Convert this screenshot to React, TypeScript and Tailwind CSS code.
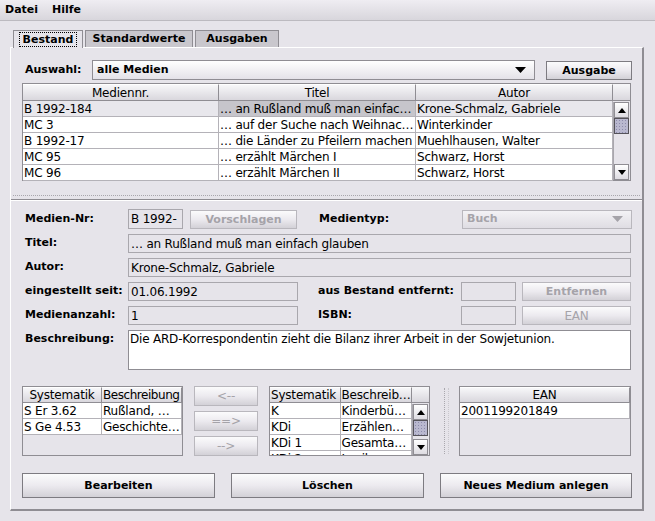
import React from "react";

const F = { fontFamily: '"DejaVu Sans", "Liberation Sans", sans-serif' };

function Btn({ w, h, label, disabled, bold = true }: { w: number; h: number; label: string; disabled?: boolean; bold?: boolean }) {
  return (
    <div
      className={`flex items-center justify-center border bg-gradient-to-b from-[#fbfbfc] via-[#eceaef] to-[#d3d1d7] ${disabled ? "border-[#b9b7bd] text-[#a5a3a9]" : "border-[#7d7b81] text-black"} ${bold ? "font-bold text-[11px]" : "text-[12px] tracking-[-0.2px]"} leading-none`}
      style={{ width: w, height: h }}
    >
      {label}
    </div>
  );
}

function Field({ w, h = 19, text, white }: { w: number; h?: number; text?: string; white?: boolean }) {
  return (
    <div
      className={`flex items-center border border-[#a9a7ad] ${white ? "bg-white" : "bg-[#e6e4ea]"} pl-[2px] text-[12px] tracking-[-0.2px] text-black whitespace-nowrap overflow-hidden`}
      style={{ width: w, height: h }}
    >
      {text}
    </div>
  );
}

function Label({ w, children }: { w: number; children: React.ReactNode }) {
  return (
    <div className="font-bold text-[11px] text-black whitespace-nowrap" style={{ width: w }}>
      {children}
    </div>
  );
}

function Scrollbar({ h }: { h: number }) {
  return (
    <div className="flex flex-col w-[16px] bg-[#e6e4ea] border-l border-[#a9a7ad]" style={{ height: h }}>
      <div className="h-[16px] flex items-center justify-center border border-[#8f8d93] bg-gradient-to-b from-white to-[#dedce2]">
        <svg width="8" height="5" viewBox="0 0 8 5"><path d="M4 0 L8 5 L0 5 Z" fill="#000" /></svg>
      </div>
      <div
        className="h-[16px] border border-[#55535a] bg-[#b9b8cf]"
        style={{ backgroundImage: "radial-gradient(#8d8bab 0.7px, transparent 0.8px)", backgroundSize: "3px 3px" }}
      />
      <div className="flex-1" />
      <div className="h-[16px] flex items-center justify-center border border-[#8f8d93] bg-gradient-to-b from-white to-[#dedce2]">
        <svg width="8" height="5" viewBox="0 0 8 5"><path d="M0 0 L8 0 L4 5 Z" fill="#000" /></svg>
      </div>
    </div>
  );
}

function HeaderCell({ w, label, align = "center", tight }: { w: number; label: string; align?: "center" | "left"; tight?: boolean }) {
  return (
    <div
      className={`h-full flex items-center ${align === "center" ? "justify-center" : "justify-start pl-[1px]"} border-r border-b border-[#8f8d93] border-t border-t-white bg-gradient-to-b from-[#f7f7f9] to-[#d9d7dd] text-[12px] ${tight ? "tracking-[-0.45px]" : "tracking-[-0.2px]"} whitespace-nowrap overflow-hidden`}
      style={{ width: w }}
    >
      {label}
    </div>
  );
}

function Cell({ w, text, bg = "bg-white" }: { w: number; text: string; bg?: string }) {
  return (
    <div
      className={`h-full flex items-center pl-[1px] border-r border-b border-[#b4b2b8] ${bg} text-[12px] tracking-[-0.2px] whitespace-nowrap overflow-hidden`}
      style={{ width: w }}
    >
      {text}
    </div>
  );
}

export default function App() {
  const rows = [
    ["B 1992-184", "… an Rußland muß man einfac…", "Krone-Schmalz, Gabriele"],
    ["MC 3", "… auf der Suche nach Weihnac…", "Winterkinder"],
    ["B 1992-17", "… die Länder zu Pfeilern machen", "Muehlhausen, Walter"],
    ["MC 95", "… erzählt Märchen I", "Schwarz, Horst"],
    ["MC 96", "… erzählt Märchen II", "Schwarz, Horst"],
  ];
  return (
    <div className="w-[655px] h-[521px] bg-[#e6e4ea] text-black overflow-hidden" style={F}>
      {/* menu */}
      <div className="h-[21px] flex items-center gap-[14px] pl-[5px] bg-gradient-to-b from-[#efedf2] to-[#d8d6dc] border-b border-[#bcbac0] font-bold text-[11px]">
        <span>Datei</span>
        <span>Hilfe</span>
      </div>
      {/* tabs */}
      <div className="flex items-end pl-[13px] mt-[9px] h-[17px] gap-[2px]">
        <div className="h-[18px] w-[70px] border-t border-l border-r border-[#8f8d93] bg-[#e6e4ea] flex items-center justify-center relative z-10 -mb-[1px]">
          <span className="font-bold text-[11px] border border-dotted border-black px-[3px] leading-[13px]">Bestand</span>
        </div>
        <div className="h-[17px] w-[108px] border-t border-l border-r border-[#8f8d93] bg-[#c9c7cd] flex items-center justify-center font-bold text-[11px]">
          Standardwerte
        </div>
        <div className="h-[17px] w-[84px] border-t border-l border-r border-[#8f8d93] bg-[#c9c7cd] flex items-center justify-center font-bold text-[11px]">
          Ausgaben
        </div>
      </div>
      {/* panel */}
      <div className="ml-[10px] w-[634px] h-[464px] border-t border-l border-white border-r-2 border-b-2 border-r-[#8f8d93] border-b-[#8f8d93] flex flex-col">
        <div className="flex items-center mt-[12px] ml-[14px] h-[20px]">
          <Label w={67}>Auswahl:</Label>
          <div className="w-[443px] h-[20px] border border-[#8f8d93] bg-gradient-to-b from-white to-[#e4e2e8] flex items-center pl-[4px] font-bold text-[11px] justify-between pr-[8px]">
            <span>alle Medien</span>
            <svg width="11" height="6" viewBox="0 0 11 6"><path d="M0 0 L11 0 L5.5 6 Z" fill="#000" /></svg>
          </div>
          <div className="ml-[11px]">
            <Btn w={86} h={19} label="Ausgabe" />
          </div>
        </div>
        {/* table */}
        <div className="ml-[11px] mt-[3px] w-[609px] h-[98px] border border-[#8f8d93] flex bg-[#e6e4ea]">
          <div className="flex flex-col w-[590px]">
            <div className="h-[17px] flex">
              <HeaderCell w={196} label="Mediennr." />
              <HeaderCell w={197} label="Titel" />
              <HeaderCell w={197} label="Autor" />
            </div>
            {rows.map((r, i) => (
              <div key={i} className="h-[16px] flex">
                <Cell w={196} text={r[0]} bg={i === 0 ? "bg-[#e8e7ec]" : "bg-white"} />
                <Cell w={197} text={r[1]} bg={i === 0 ? "bg-[#c6c5cb]" : "bg-white"} />
                <Cell w={197} text={r[2]} bg={i === 0 ? "bg-[#e8e7ec]" : "bg-white"} />
              </div>
            ))}
          </div>
          <div className="flex flex-col w-[17px]">
            <div className="h-[17px] border-b border-[#8f8d93] bg-gradient-to-b from-[#f7f7f9] to-[#d9d7dd]" />
            <div className="mt-[1px]">
              <Scrollbar h={78} />
            </div>
          </div>
        </div>
        {/* divider */}
        <div className="mt-[14px] h-[1px] mx-[2px] border-t border-dotted border-[#a9a7ad]" />
        <div className="mt-[3px] h-[2px] border-t border-[#8f8d93] border-b border-b-white" />
        {/* details */}
        <div className="flex flex-col ml-[14px] mt-[8px] gap-[5px]">
          <div className="flex items-center h-[20px]">
            <Label w={103}>Medien-Nr:</Label>
            <Field w={55} h={20} text="B 1992-" />
            <div className="ml-[7px]"><Btn w={107} h={19} label="Vorschlagen" disabled /></div>
            <div className="ml-[22px]"><Label w={143}>Medientyp:</Label></div>
            <div className="w-[170px] h-[19px] border border-[#b9b7bd] bg-gradient-to-b from-[#f3f2f5] to-[#dfdde3] flex items-center justify-between pl-[4px] pr-[8px] font-bold text-[11px] text-[#a5a3a9]">
              <span>Buch</span>
              <svg width="11" height="6" viewBox="0 0 11 6"><path d="M0 0 L11 0 L5.5 6 Z" fill="#a5a3a9" /></svg>
            </div>
          </div>
          <div className="flex items-center h-[19px]">
            <Label w={103}>Titel:</Label>
            <Field w={503} text="… an Rußland muß man einfach glauben" />
          </div>
          <div className="flex items-center h-[19px]">
            <Label w={103}>Autor:</Label>
            <Field w={503} text="Krone-Schmalz, Gabriele" />
          </div>
          <div className="flex items-center h-[19px]">
            <Label w={103}>eingestellt seit:</Label>
            <Field w={170} text="01.06.1992" />
            <div className="ml-[20px]"><Label w={143}>aus Bestand entfernt:</Label></div>
            <Field w={55} />
            <div className="ml-[6px]"><Btn w={109} h={19} label="Entfernen" disabled /></div>
          </div>
          <div className="flex items-center h-[19px]">
            <Label w={103}>Medienanzahl:</Label>
            <Field w={170} text="1" />
            <div className="ml-[20px]"><Label w={143}>ISBN:</Label></div>
            <Field w={55} />
            <div className="ml-[6px]"><Btn w={109} h={19} label="EAN" disabled bold={false} /></div>
          </div>
          <div className="flex items-start h-[40px]">
            <div className="pt-[1px]"><Label w={103}>Beschreibung:</Label></div>
            <div className="w-[503px] h-[40px] border border-[#8f8d93] bg-white pl-[1px] text-[12px] tracking-[-0.2px] leading-[16px]">
              Die ARD-Korrespondentin zieht die Bilanz ihrer Arbeit in der Sowjetunion.
            </div>
          </div>
        </div>
        {/* bottom tables */}
        <div className="flex ml-[11px] mt-[16px] h-[70px] items-start">
          <div className="w-[161px] h-[70px] border border-[#8f8d93] bg-[#e6e4ea] flex flex-col">
            <div className="h-[16px] flex">
              <HeaderCell w={79} label="Systematik" />
              <HeaderCell w={80} label="Beschreibung" align="left" tight />
            </div>
            <div className="h-[16px] flex">
              <Cell w={79} text="S Er 3.62" />
              <Cell w={80} text="Rußland, …" />
            </div>
            <div className="h-[16px] flex">
              <Cell w={79} text="S Ge 4.53" />
              <Cell w={80} text="Geschichte…" />
            </div>
          </div>
          <div className="ml-[11px] flex flex-col gap-[5px]">
            <Btn w={64} h={20} label="<--" disabled bold={false} />
            <Btn w={64} h={20} label="==>" disabled bold={false} />
            <Btn w={64} h={20} label="-->" disabled bold={false} />
          </div>
          <div className="ml-[11px] w-[161px] h-[70px] border border-[#8f8d93] bg-[#e6e4ea] flex overflow-hidden">
            <div className="flex flex-col w-[143px] overflow-hidden">
              <div className="h-[16px] flex shrink-0">
                <HeaderCell w={71} label="Systematik" align="left" />
                <HeaderCell w={72} label="Beschreib…" align="left" />
              </div>
              {[["K", "Kinderbü…"], ["KDi", "Erzählen…"], ["KDi 1", "Gesamta…"], ["KDi 2", "Lexikon"]].map((r, i) => (
                <div key={i} className="h-[16px] flex shrink-0">
                  <Cell w={71} text={r[0]} />
                  <Cell w={72} text={r[1]} />
                </div>
              ))}
            </div>
            <div className="flex flex-col w-[17px]">
              <div className="h-[16px] border-b border-[#8f8d93] bg-gradient-to-b from-[#f7f7f9] to-[#d9d7dd]" />
              <div className="mt-[1px]"><Scrollbar h={51} /></div>
            </div>
          </div>
          <div className="ml-[14px] mt-[2px] h-[66px] w-[5px] border-l border-dotted border-[#a9a7ad] border-r border-r-[#c9c7cd]" />
          <div className="ml-[10px] w-[172px] h-[70px] border border-[#8f8d93] bg-[#e6e4ea] flex flex-col">
            <div className="h-[16px] flex">
              <HeaderCell w={170} label="EAN" />
            </div>
            <div className="h-[16px] flex">
              <Cell w={170} text="2001199201849" />
            </div>
          </div>
        </div>
        <div className="flex ml-[11px] mt-[17px] gap-[16px]">
          <Btn w={193} h={25} label="Bearbeiten" />
          <Btn w={193} h={25} label="Löschen" />
          <Btn w={192} h={25} label="Neues Medium anlegen" />
        </div>
      </div>
    </div>
  );
}
